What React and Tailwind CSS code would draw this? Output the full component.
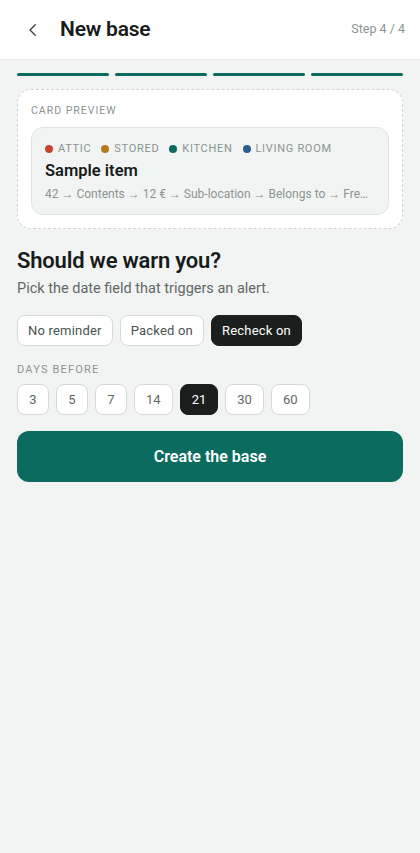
import React from "react";

const tags = [
  { label: "ATTIC", color: "bg-[#c8462f]" },
  { label: "STORED", color: "bg-[#b87a1f]" },
  { label: "KITCHEN", color: "bg-[#0b6b5e]" },
  { label: "LIVING ROOM", color: "bg-[#2d5b8c]" },
];

const days = ["3", "5", "7", "14", "21", "30", "60"];

export default function App() {
  return (
    <div className="min-h-[853px] w-[420px] bg-[#f2f4f3] font-['Roboto',sans-serif] text-[#171c1b]">
      <header className="flex h-[60px] items-center border-b border-[#e3e7e5] bg-white pl-[24px] pr-[15px]">
        <svg width="18" height="18" viewBox="0 0 24 24" fill="none" stroke="#3a403f" strokeWidth="1.8" strokeLinecap="round" strokeLinejoin="round">
          <path d="M15 5l-7 7 7 7" />
        </svg>
        <h1 className="ml-[18px] text-[21px] font-semibold tracking-[-0.2px]">New base</h1>
        <span className="ml-auto text-[12.5px] text-[#8a9491]">Step 4 / 4</span>
      </header>

      <main className="flex flex-col px-[17px]">
        <div className="mt-[13px] flex gap-[6px]">
          <div className="h-[3px] flex-1 rounded-full bg-[#0b6b5e]" />
          <div className="h-[3px] flex-1 rounded-full bg-[#0b6b5e]" />
          <div className="h-[3px] flex-1 rounded-full bg-[#0b6b5e]" />
          <div className="h-[3px] flex-1 rounded-full bg-[#0b6b5e]" />
        </div>

        <section className="mt-[13px] rounded-[14px] border border-dashed border-[#cfd6d3] bg-white px-[13px] pb-[13px] pt-[14px]">
          <div className="text-[10.5px] leading-[14px] tracking-[1px] text-[#8a9491]">CARD PREVIEW</div>
          <div className="mt-[9px] rounded-[12px] border border-[#dfe4e2] bg-[#f2f4f3] px-[13px] pb-[12px] pt-[14px]">
            <div className="flex items-center gap-[10px] text-[11px] leading-[14px] tracking-[0.7px] text-[#8a9491]">
              {tags.map((t) => (
                <span key={t.label} className="flex items-center gap-[5px]">
                  <span className={`h-[8px] w-[8px] rounded-full ${t.color}`} />
                  {t.label}
                </span>
              ))}
            </div>
            <div className="mt-[4px] text-[16.5px] font-semibold leading-[22px]">Sample item</div>
            <div className="mt-[4px] whitespace-nowrap text-[12px] leading-[16px] text-[#8a9491]">
              42 → Contents → 12 € → Sub-location → Belongs to → Fre…
            </div>
          </div>
        </section>

        <h2 className="mt-[18px] text-[22px] font-semibold leading-[28px] tracking-[-0.2px]">Should we warn you?</h2>
        <p className="mt-[4px] text-[14.5px] leading-[20px] text-[#5f6866]">Pick the date field that triggers an alert.</p>

        <div className="mt-[16px] flex gap-[7px]">
          <button className="h-[31px] rounded-[8px] border border-[#d5dbd9] bg-white px-[10px] text-[13px] tracking-[0.2px] text-[#4a5250]">No reminder</button>
          <button className="h-[31px] rounded-[8px] border border-[#d5dbd9] bg-white px-[10px] text-[13px] tracking-[0.2px] text-[#4a5250]">Packed on</button>
          <button className="h-[31px] rounded-[8px] border border-[#1a1f1e] bg-[#1a1f1e] px-[10px] text-[13px] tracking-[0.2px] text-white">Recheck on</button>
        </div>

        <div className="mt-[17px] text-[11px] leading-[14px] tracking-[1.2px] text-[#8a9491]">DAYS BEFORE</div>
        <div className="mt-[7px] flex gap-[7px]">
          {days.map((d) =>
            d === "21" ? (
              <button key={d} className="h-[31px] min-w-[32px] rounded-[8px] border border-[#1a1f1e] bg-[#1a1f1e] px-[11px] text-[13px] text-white">{d}</button>
            ) : (
              <button key={d} className="h-[31px] min-w-[32px] rounded-[8px] border border-[#d5dbd9] bg-white px-[11px] text-[13px] text-[#5f6866]">{d}</button>
            )
          )}
        </div>

        <button className="mt-[16px] h-[51px] w-full rounded-[12px] bg-[#0b6b5e] text-[16px] font-semibold text-white">Create the base</button>
      </main>
    </div>
  );
}
